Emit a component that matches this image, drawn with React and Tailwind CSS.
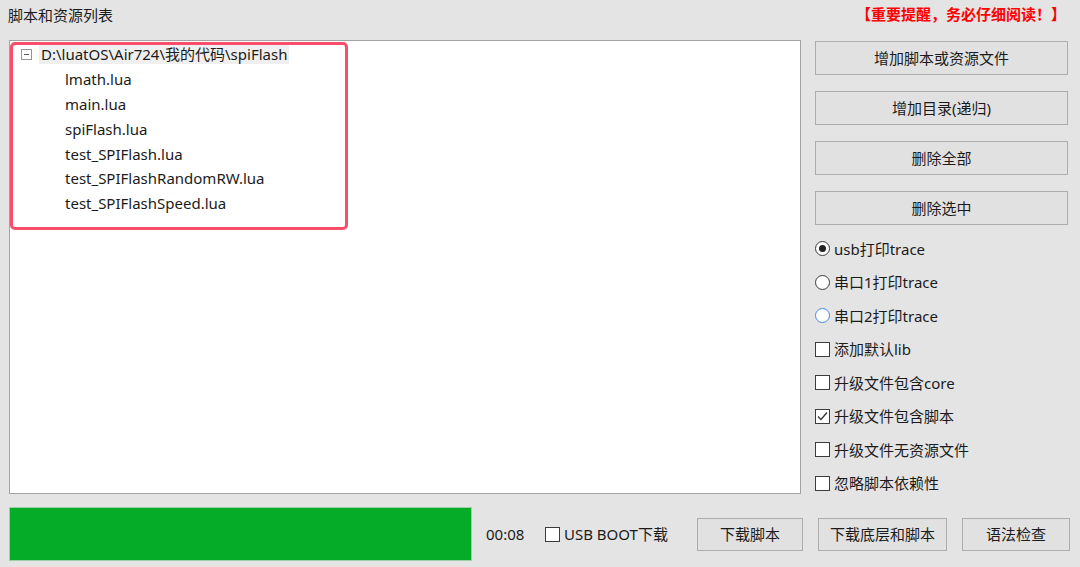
import React from 'react'

const files = [
  'lmath.lua',
  'main.lua',
  'spiFlash.lua',
  'test_SPIFlash.lua',
  'test_SPIFlashRandomRW.lua',
  'test_SPIFlashSpeed.lua',
]

const sideButtons = ['增加脚本或资源文件', '增加目录(递归)', '删除全部', '删除选中']

function Radio({ checked, focus, label }) {
  return (
    <div className="h-[33.5px] shrink-0 flex items-center">
      <span
        className={
          'w-[15px] h-[15px] rounded-full border bg-white flex items-center justify-center ' +
          (focus ? 'border-[#3a8ee6]' : 'border-[#3c3c3c]')
        }
      >
        {checked && <span className="w-[7px] h-[7px] rounded-full bg-[#222]" />}
      </span>
      <span className="ml-[4px]">{label}</span>
    </div>
  )
}

function Check({ checked, label, className = '' }) {
  return (
    <div className={'h-[33.5px] shrink-0 flex items-center ' + className}>
      <span className="w-[15px] h-[15px] border border-[#3c3c3c] bg-white flex items-center justify-center">
        {checked && (
          <svg width="11" height="11" viewBox="0 0 11 11">
            <path d="M1 5.5 L4 8.5 L10 1.5" fill="none" stroke="#333" strokeWidth="1.3" />
          </svg>
        )}
      </span>
      <span className="ml-[4px]">{label}</span>
    </div>
  )
}

function Btn({ children, className = '' }) {
  return (
    <button className={'bg-[#e1e1e1] border border-[#adadad] flex items-center justify-center shrink-0 ' + className}>
      {children}
    </button>
  )
}

export default function App() {
  return (
    <div className="w-[1080px] h-[567px] bg-[#e4e4e4] overflow-hidden flex flex-col text-[15px] text-[#1b1b1b] font-['Noto_Sans','Noto_Sans_CJK_SC',sans-serif]">
      <div className="h-[40px] shrink-0 flex justify-between pl-[8px] pr-[14px]">
        <span className="mt-[5px] leading-[20px]">脚本和资源列表</span>
        <span className="mt-[4px] leading-[20px] font-bold text-[15px] text-[#ff0000]">【重要提醒，务必仔细阅读！】</span>
      </div>

      <div className="h-[454px] shrink-0 flex items-start pl-[9px]">
        <div className="w-[792px] h-[454px] bg-white border border-[#a3a3a3] relative">
          <div className="absolute left-0 top-[1px] w-[338px] h-[188px] border-[3px] border-[#fa4d69] rounded-[5px]" />
          <div className="h-[26px] flex items-center pl-[11px]">
            <span className="w-[11px] h-[11px] border border-[#969696] flex items-center justify-center">
              <span className="w-[5px] h-[1px] bg-[#555]" />
            </span>
            <span className="ml-[7px] bg-[#efefef] px-[2px] leading-[20px]">D:\luatOS\Air724\我的代码\spiFlash</span>
          </div>
          {files.map(f => (
            <div key={f} className="h-[24.8px] flex items-center pl-[55px]">
              {f}
            </div>
          ))}
        </div>

        <div className="ml-[14px] w-[253px] flex flex-col pt-[1px]">
          <div className="flex flex-col gap-[16px]">
            {sideButtons.map(b => (
              <Btn key={b} className="h-[34px]">{b}</Btn>
            ))}
          </div>
          <div className="mt-[7px] flex flex-col">
            <Radio checked label="usb打印trace" />
            <Radio label="串口1打印trace" />
            <Radio focus label="串口2打印trace" />
            <Check label="添加默认lib" />
            <Check label="升级文件包含core" />
            <Check checked label="升级文件包含脚本" />
            <Check label="升级文件无资源文件" />
            <Check label="忽略脚本依赖性" />
          </div>
        </div>
      </div>

      <div className="mt-[13px] flex items-center pl-[9px]">
        <div className="w-[463px] h-[54px] shrink-0 bg-[#05ac27] border border-[#9fcfa8]" />
        <span className="ml-[14px] w-[38px] shrink-0">00:08</span>
        <Check label="USB BOOT下载" className="ml-[21px] w-[131px]" />
        <Btn className="ml-[21px] w-[106px] h-[33px]">下载脚本</Btn>
        <Btn className="ml-[15px] w-[129px] h-[33px]">下载底层和脚本</Btn>
        <Btn className="ml-[15px] w-[108px] h-[33px]">语法检查</Btn>
      </div>
    </div>
  )
}
